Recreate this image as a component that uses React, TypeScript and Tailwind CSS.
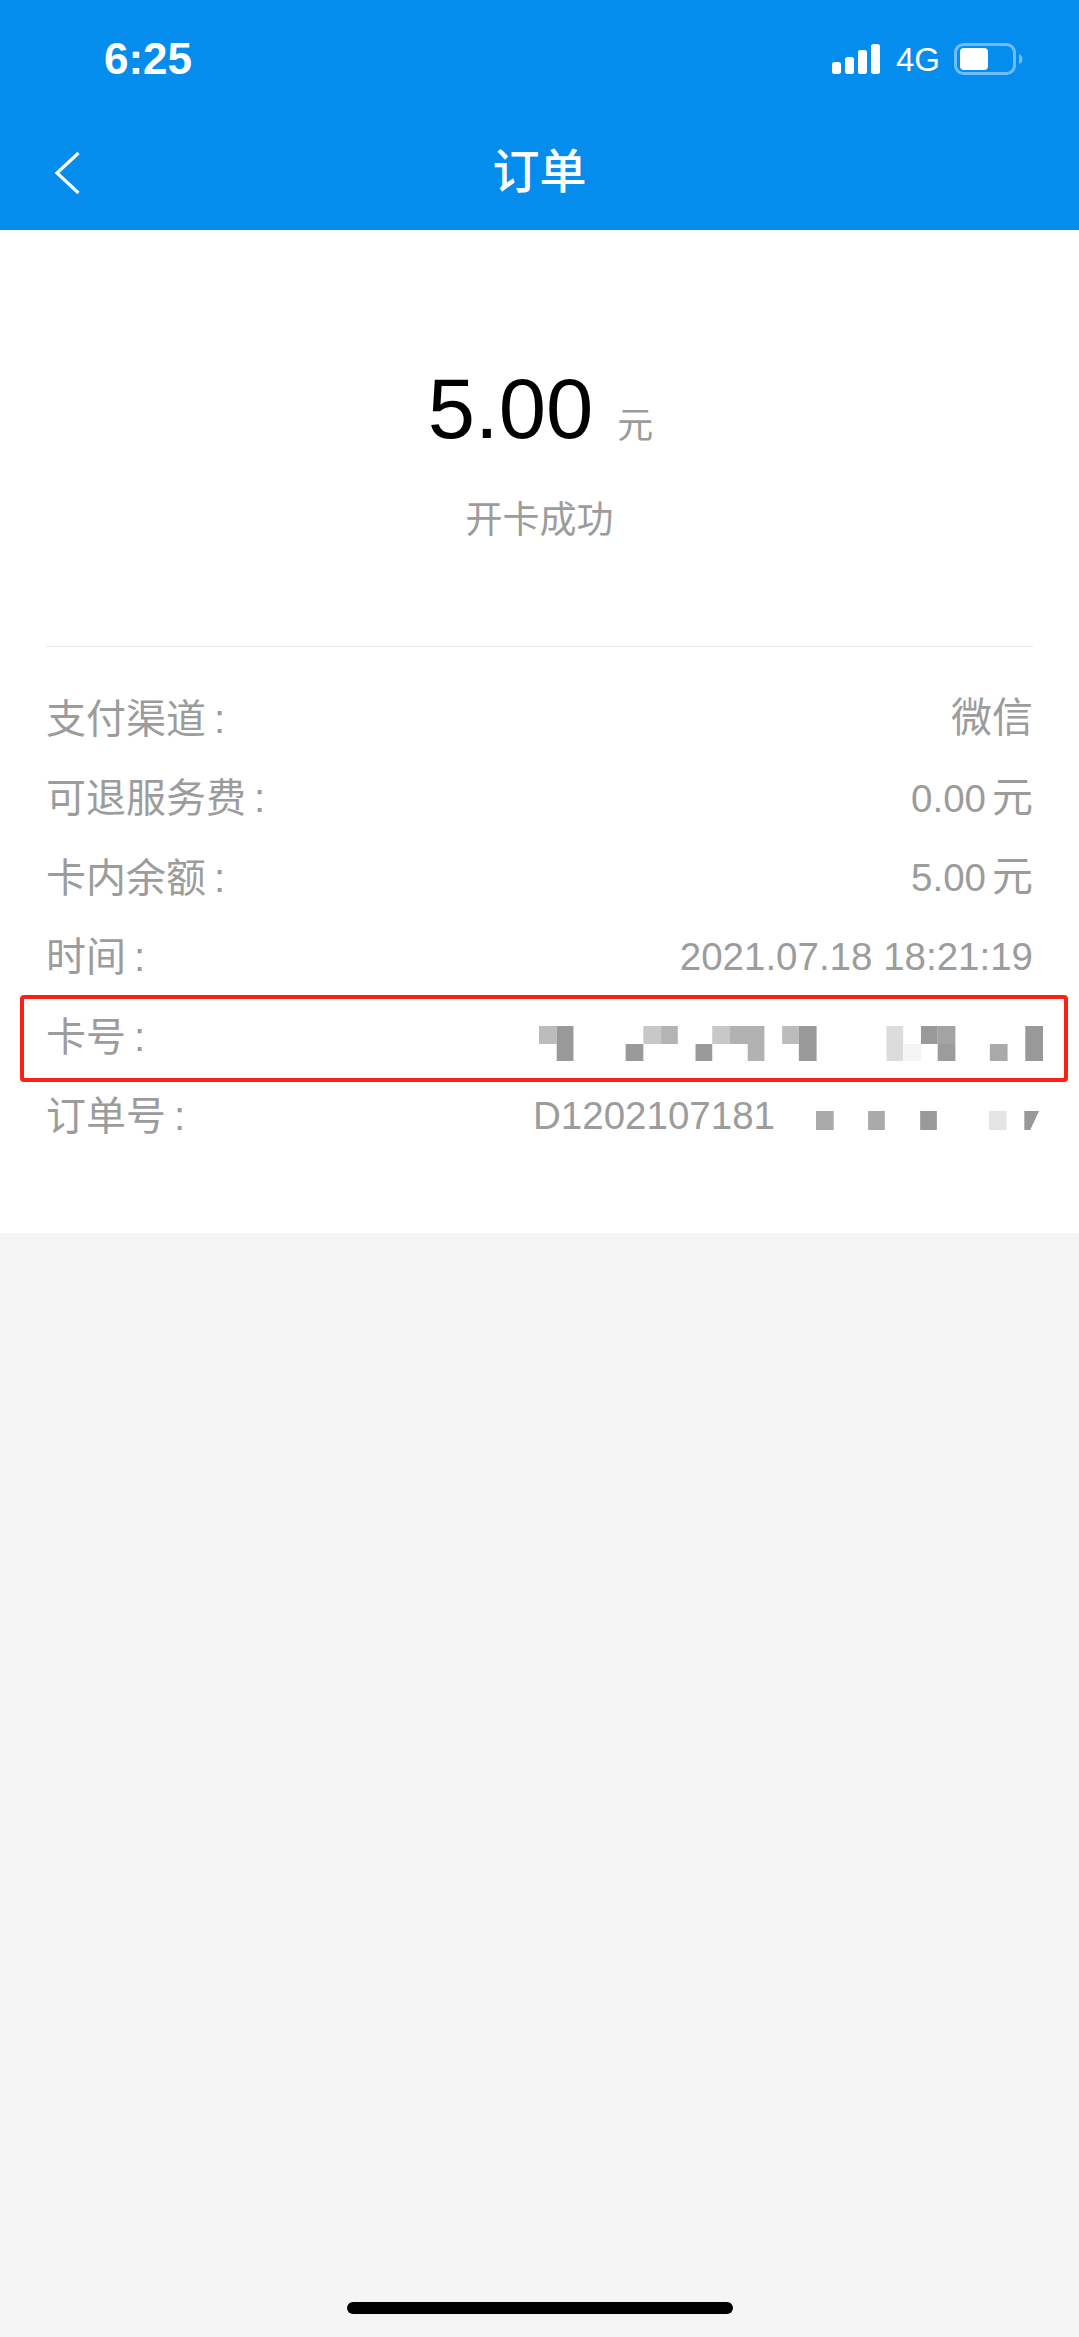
const sans = "font-['Liberation_Sans','Noto_Sans_CJK_SC',sans-serif]";

const rows = [
  { label: "支付渠道", value: "微信", unit: "" },
  { label: "可退服务费", value: "0.00", unit: "元" },
  { label: "卡内余额", value: "5.00", unit: "元" },
  { label: "时间", value: "2021.07.18 18:21:19", unit: "" },
];

// blurred-out digits, [x, y, w, h, colour] in a 512x35 box
const cardBlocks: [number, number, number, number, string][] = [
  [0, 0, 18, 18, "#bcbcbc"],
  [18, 0, 17, 35, "#999999"],
  [88, 18, 18, 17, "#9a9a9a"],
  [106, 0, 18, 18, "#c8c8c8"],
  [124, 0, 17, 18, "#b4b4b4"],
  [159, 18, 17, 17, "#9a9a9a"],
  [176, 0, 18, 18, "#c8c8c8"],
  [194, 0, 35, 18, "#b2b2b2"],
  [212, 18, 17, 17, "#b2b2b2"],
  [247, 0, 17, 18, "#bcbcbc"],
  [264, 0, 18, 35, "#999999"],
  [353, 0, 17, 35, "#dcdcdc"],
  [370, 18, 18, 17, "#f5f5f5"],
  [388, 0, 17, 18, "#999999"],
  [405, 0, 18, 18, "#a4a4a4"],
  [405, 18, 18, 17, "#9c9c9c"],
  [458, 18, 18, 17, "#aaaaaa"],
  [494, 0, 18, 35, "#999999"],
];

const orderBlocks: [number, number, number, number, string][] = [
  [0, 0, 18, 19, "#aaaaaa"],
  [53, 0, 17, 19, "#aaaaaa"],
  [106, 0, 17, 19, "#999999"],
  [176, 0, 18, 19, "#e4e4e4"],
];

const Label = ({ text }: { text: string }) => (
  <span className="text-[40px]">
    {text}
    <span className="ml-[8px]">:</span>
  </span>
);

const App = () => {
  return (
    <div className={`flex h-[2337px] w-[1079px] flex-col overflow-hidden bg-[#f5f5f5] ${sans}`}>
      <div className="h-[230px] shrink-0 bg-[#058dee] text-white">
        <div className="flex h-[118px] items-center justify-between pl-[104px] pr-[56px]">
          <span className="text-[44px] leading-none font-bold">6:25</span>
          <div className="flex items-center">
            <svg width="48" height="30" viewBox="0 0 48 30" fill="#fff">
              <rect x="0" y="18" width="9" height="12" rx="2.5" />
              <rect x="13" y="13" width="9" height="17" rx="2.5" />
              <rect x="26" y="6" width="9" height="24" rx="2.5" />
              <rect x="39" y="0" width="9" height="30" rx="2.5" />
            </svg>
            <span className="ml-[16px] text-[33px] leading-none">4G</span>
            <svg className="ml-[14px]" width="69" height="32" viewBox="0 0 69 32">
              <rect x="1.5" y="1.5" width="59" height="29" rx="8" fill="none" stroke="#6fbcf6" strokeWidth="3" />
              <rect x="6" y="5" width="28" height="22" rx="4" fill="#fff" />
              <path d="M65 11c2.500 1 3.500 3 3.500 5s-1 4-3.500 5z" fill="#6fbcf6" />
            </svg>
          </div>
        </div>
        <div className="relative flex h-[111px] items-center justify-center pb-[5px]">
          <svg className="absolute left-[54px] top-[33px]" width="26" height="44" viewBox="0 0 26 44" fill="none">
            <path d="M24.500 2 3 22l21.500 20" stroke="#fff" strokeWidth="3.200" />
          </svg>
          <span className="text-[47px] leading-none font-medium">订单</span>
        </div>
      </div>

      <div className="bg-white px-[46px] pb-[77px]">
        <div className="flex flex-col items-center border-b border-[#e8e8e8] pt-[130px] pb-[101px]">
          <div className="flex items-baseline pl-[2px]">
            <span className="text-[85px] leading-[98px] text-black">5.00</span>
            <span className="ml-[24px] text-[36px] leading-none text-[#9c9c9c]">元</span>
          </div>
          <span className="mt-[39px] text-[37px] leading-[48px] text-[#9c9c9c]">开卡成功</span>
        </div>

        <div className="pt-[32px] text-[38.500px] text-[#9c9c9c]">
          {rows.map((row) => (
            <div key={row.label} className="flex h-[79.500px] items-center justify-between">
              <Label text={row.label} />
              <span className={row.value === "微信" ? "text-[41px]" : ""}>
                {row.value}
                {row.unit && <span className="ml-[6px] text-[41px]">{row.unit}</span>}
              </span>
            </div>
          ))}

          <div className="relative flex h-[79.500px] items-center justify-between">
            <Label text="卡号" />
            <svg className="mr-[-10px] mt-[14px]" width="504" height="35" viewBox="0 0 512 35" preserveAspectRatio="none">
              {cardBlocks.map(([x, y, w, h, fill]) => (
                <rect key={`${x}-${y}`} x={x} y={y} width={w} height={h} fill={fill} />
              ))}
            </svg>
            <div className="absolute -left-[26px] -right-[35px] top-[-2px] h-[87px] rounded-[4px] border-[4px] border-[#fb2015]" />
          </div>

          <div className="flex h-[79.500px] items-center">
            <Label text="订单号" />
            <span className="ml-auto">D1202107181</span>
            <svg className="ml-[41px] mr-[-10px] mt-[8px]" width="227" height="19" viewBox="0 0 231 19" preserveAspectRatio="none">
              {orderBlocks.map(([x, y, w, h, fill]) => (
                <rect key={x} x={x} y={y} width={w} height={h} fill={fill} />
              ))}
              <path d="M212 0h15l-9 19h-6z" fill="#999999" />
            </svg>
          </div>
        </div>
      </div>

      <div className="flex flex-1 items-end justify-center pb-[23px]">
        <div className="h-[12px] w-[386px] rounded-full bg-black" />
      </div>
    </div>
  );
};

export default App;
